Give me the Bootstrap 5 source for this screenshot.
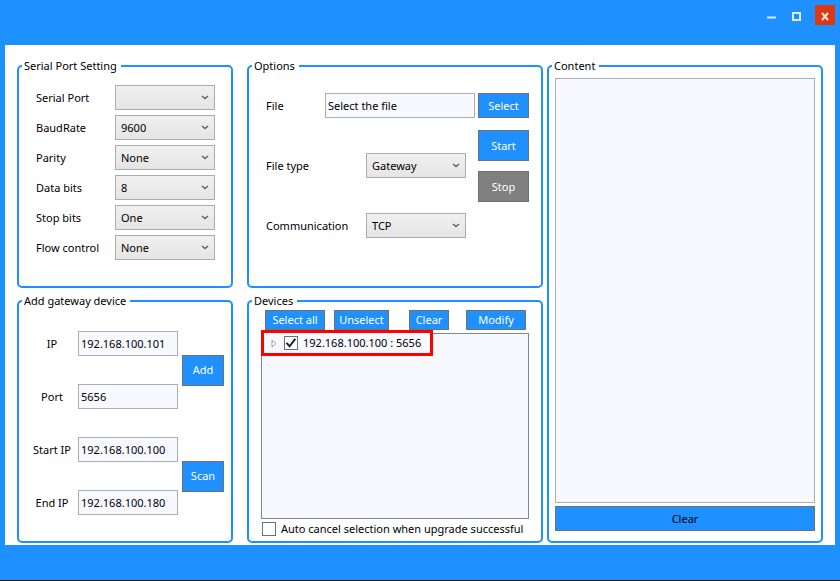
<!DOCTYPE html>
<html lang="en">
<head>
<meta charset="utf-8">
<meta name="viewport" content="width=device-width, initial-scale=1">
<title>Gateway upgrade tool</title>
<link href="https://cdn.jsdelivr.net/npm/bootstrap@5.3.0/dist/css/bootstrap.min.css" rel="stylesheet">
<style>
  :root { --accent: #1e90ff; --pane: #f8f8ff; --text-size: 11px; }
  body { font: var(--text-size)/16px "Noto Sans", "Open Sans", sans-serif; color: #000; background: var(--accent); border-bottom: 1px solid #111; }
  .titlebar { height: 45px; padding: 5px 5px 0; }
  .win-btn { width: 20px; height: 20px; padding: 0; border: 0; background: transparent; display: flex; align-items: center; justify-content: center; }
  .win-max { margin-left: 1px; }
  .win-close { background: #dc3912; margin-left: 4px; }
  .workspace { margin: 0 5px 35px; padding: 13px 12px 2px; background: #fff; display: grid; grid-template-columns: minmax(0, 216fr) minmax(0, 314fr) minmax(0, 276fr); grid-template-rows: auto 1fr; row-gap: 5px; }
  .group-box { border: 2px solid var(--accent); border-radius: 5px; min-width: 0; }
  .group-box > legend { font-size: var(--text-size); line-height: 16px; margin-left: 3px; padding: 0 4px 0 2px; }
  .middle { margin: 0 4px 0 14px; }
  .tall { grid-column: 3; grid-row: 1 / span 2; }
  .ctl { height: 25px; font-size: var(--text-size); line-height: 16px; border-radius: 0; color: #000; }
  .form-control.ctl { padding: 0 2px; background: var(--pane); border: 1px solid #abadb3; min-height: 0; }
  .form-select.ctl { width: 100px; padding: 0 18px 0 5px; border: 1px solid #acacac;
    background: url("data:image/svg+xml,%3Csvg xmlns='http://www.w3.org/2000/svg' viewBox='0 0 8 5'%3E%3Cpath d='M1 1l3 2.6L7 1' fill='none' stroke='%23606060' stroke-width='1.4'/%3E%3C/svg%3E") no-repeat right 5px top 9px / 8px 5px, linear-gradient(#f0f0f0, #e5e5e5); }
  .btn.act { --bs-btn-font-size: var(--text-size); --bs-btn-line-height: 16px; --bs-btn-padding-x: 0; --bs-btn-padding-y: 0; --bs-btn-border-radius: 0; --bs-btn-border-color: #707070; --bs-btn-hover-border-color: #505050; --bs-btn-bg: var(--accent); --bs-btn-color: #fff; --bs-btn-hover-bg: #1478dc; --bs-btn-hover-color: #fff; height: 31px; }
  .btn.act.idle { --bs-btn-bg: #808080; }
  .btn.act.flat { height: 25px; }
  .btn.act.slim { height: 20px; }
  .btn.act.dark { --bs-btn-color: #000; }
  .serial { padding: 11px 16px 26px 17px; gap: 5px; }
  .serial label { width: 79px; }
  .options { padding: 19px 12px 12px 17px; gap: 3px; }
  .option-rows { gap: 35px; }
  .label-file { width: 59px; }
  .label-opt { width: 100px; }
  .run-buttons { width: 51px; gap: 10px; }
  .run-buttons .flat { margin-bottom: 2px; }
  .gateway { padding: 22px 7px 26px; gap: 28px; }
  .pair { gap: 4px; }
  .pair-rows { gap: 28px; }
  .pair label { width: 52px; text-align: center; }
  .pair .act { width: 42px; }
  .devices { padding: 1px 12px 4px; }
  .tools { display: grid; grid-template-columns: 69px 75px 57px 60px; justify-content: space-between; padding: 0 3px 0 4px; margin-bottom: 3px; }
  .tools .w-sel { width: 60px; }
  .tools .w-uns { width: 55px; }
  .tools .w-clr { width: 40px; }
  .device-list { border: 1px solid #828790; background: var(--pane); margin-bottom: 2px; }
  .device-item { width: 172px; height: 26px; margin: -4px 0 0 -1px; padding-left: 7px; border: 3px solid #f00; background: var(--pane); }
  .device-item label { padding-left: 5px; }
  .auto-row { padding-left: 1px; gap: 5px; }
  .twist { padding: 0; border: 0; background: none; width: 13px; height: 20px; display: flex; align-items: center; }
  .form-check-input.tick { width: 14px; height: 14px; margin: 0; border: 1px solid #707070; border-radius: 0; background-color: #fff; flex: none; }
  .form-check-input.tick:checked { background: #fff url("data:image/svg+xml,%3Csvg xmlns='http://www.w3.org/2000/svg' viewBox='0 0 12 12'%3E%3Cpath d='M1.5 5.8L4.6 9.3L10.3 1.8' fill='none' stroke='%23212121' stroke-width='2'/%3E%3C/svg%3E") center / 12px 12px no-repeat; }
  .content-pane { padding: 4px 6px 10px; gap: 3px; }
  .content-pane .log { height: auto; resize: none; }
</style>
<script src="https://cdn.jsdelivr.net/npm/bootstrap@5.3.0/dist/js/bootstrap.bundle.min.js"></script>
</head>
<body class="min-vh-100 d-flex flex-column">
<header class="titlebar d-flex justify-content-end">
  <div class="d-flex gap-1">
    <button class="win-btn" type="button" aria-label="Minimize"><svg width="10" height="20" viewBox="0 0 10 20"><path d="M0 12.5h9" stroke="#d9ecff" stroke-width="2"/></svg></button>
    <button class="win-btn win-max" type="button" aria-label="Maximize"><svg width="10" height="20" viewBox="0 0 10 20"><rect x="1" y="8" width="7" height="7" fill="none" stroke="#d9ecff" stroke-width="2"/></svg></button>
    <button class="win-btn win-close" type="button" aria-label="Close"><svg width="20" height="20" viewBox="0 0 20 20"><path d="M7 8l6 7M13 8l-6 7" stroke="#fbe4de" stroke-width="2"/></svg></button>
  </div>
</header>
<main class="workspace flex-fill">
  <fieldset class="group-box">
    <legend class="float-none w-auto mb-0">Serial Port Setting</legend>
    <div class="serial d-flex flex-column">
      <div class="d-flex align-items-center"><label for="port">Serial Port</label><select id="port" class="form-select ctl"><option></option></select></div>
      <div class="d-flex align-items-center"><label for="baud">BaudRate</label><select id="baud" class="form-select ctl"><option>9600</option></select></div>
      <div class="d-flex align-items-center"><label for="parity">Parity</label><select id="parity" class="form-select ctl"><option>None</option></select></div>
      <div class="d-flex align-items-center"><label for="data">Data bits</label><select id="data" class="form-select ctl"><option>8</option></select></div>
      <div class="d-flex align-items-center"><label for="stop">Stop bits</label><select id="stop" class="form-select ctl"><option>One</option></select></div>
      <div class="d-flex align-items-center"><label for="flow">Flow control</label><select id="flow" class="form-select ctl"><option>None</option></select></div>
    </div>
  </fieldset>
  <fieldset class="group-box middle">
    <legend class="float-none w-auto mb-0">Options</legend>
    <div class="options d-flex">
      <div class="option-rows d-flex flex-column flex-fill">
        <div class="d-flex align-items-center"><label class="label-file flex-shrink-0" for="file">File</label><input id="file" class="form-control ctl" type="text" value="Select the file"></div>
        <div class="d-flex align-items-center"><label class="label-opt" for="ftype">File type</label><select id="ftype" class="form-select ctl"><option>Gateway</option></select></div>
        <div class="d-flex align-items-center"><label class="label-opt" for="comm">Communication</label><select id="comm" class="form-select ctl"><option>TCP</option></select></div>
      </div>
      <div class="run-buttons d-flex flex-column flex-shrink-0">
        <button class="btn act flat" type="button">Select</button>
        <button class="btn act" type="button">Start</button>
        <button class="btn act idle" type="button">Stop</button>
      </div>
    </div>
  </fieldset>
  <fieldset class="group-box tall d-flex flex-column">
    <legend class="float-none w-auto mb-0">Content</legend>
    <div class="content-pane d-flex flex-column flex-fill">
      <textarea class="form-control ctl log flex-fill" aria-label="Content"></textarea>
      <button class="btn act flat dark" type="button">Clear</button>
    </div>
  </fieldset>
  <fieldset class="group-box">
    <legend class="float-none w-auto mb-0">Add gateway device</legend>
    <div class="gateway d-flex flex-column">
      <div class="pair d-flex align-items-center">
        <div class="pair-rows d-flex flex-column flex-fill">
          <div class="d-flex align-items-center"><label class="flex-shrink-0" for="ip">IP</label><input id="ip" class="form-control ctl" type="text" value="192.168.100.101"></div>
          <div class="d-flex align-items-center"><label class="flex-shrink-0" for="ipport">Port</label><input id="ipport" class="form-control ctl" type="text" value="5656"></div>
        </div>
        <button class="btn act flex-shrink-0" type="button">Add</button>
      </div>
      <div class="pair d-flex align-items-center">
        <div class="pair-rows d-flex flex-column flex-fill">
          <div class="d-flex align-items-center"><label class="flex-shrink-0" for="start">Start IP</label><input id="start" class="form-control ctl" type="text" value="192.168.100.100"></div>
          <div class="d-flex align-items-center"><label class="flex-shrink-0" for="end">End IP</label><input id="end" class="form-control ctl" type="text" value="192.168.100.180"></div>
        </div>
        <button class="btn act flex-shrink-0" type="button">Scan</button>
      </div>
    </div>
  </fieldset>
  <fieldset class="group-box middle d-flex flex-column">
    <legend class="float-none w-auto mb-0">Devices</legend>
    <div class="devices d-flex flex-column flex-fill">
      <div class="tools">
        <button class="btn act slim w-sel" type="button">Select all</button>
        <button class="btn act slim w-uns" type="button">Unselect</button>
        <button class="btn act slim w-clr" type="button">Clear</button>
        <button class="btn act slim" type="button">Modify</button>
      </div>
      <div class="device-list flex-fill">
        <div class="device-item d-flex align-items-center">
          <button class="twist" type="button" aria-label="Expand"><svg width="6" height="9" viewBox="0 0 6 9"><path d="M1 1v7l4-3.5z" fill="#fff" stroke="#a0a0a0"/></svg></button>
          <input id="dev" class="form-check-input tick" type="checkbox" checked>
          <label for="dev">192.168.100.100 : 5656</label>
        </div>
      </div>
      <div class="auto-row d-flex align-items-center">
        <input id="auto" class="form-check-input tick" type="checkbox">
        <label class="text-nowrap" for="auto">Auto cancel selection when upgrade successful</label>
      </div>
    </div>
  </fieldset>
</main>
</body>
</html>
